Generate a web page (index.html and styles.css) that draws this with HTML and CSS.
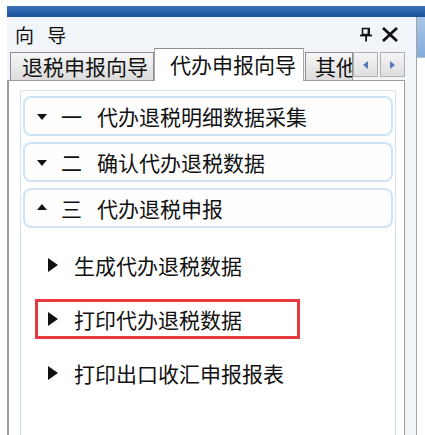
FILE: index.html
```html
<!DOCTYPE html>
<html lang="zh-CN">
<head>
    <meta charset="UTF-8">
    <title>向导</title>
    <link rel="stylesheet" href="styles.css">
</head>
<body>

    <div class="desk">
        <div class="cap"></div>

        <div class="row">
            <div class="pane">
                <div class="head">
                    <span class="title">向 导</span>
                    <span class="tools">
                        <svg class="pin" width="12" height="15" viewBox="0 0 12 15">
                            <path d="M2.5 1.5 H9 V7.5 H2.5 Z" fill="none" stroke="#111" stroke-width="1.6"/>
                            <rect x="7.6" y="1" width="2.2" height="7" fill="#111"/>
                            <rect x="0" y="7.6" width="12" height="1.8" fill="#111"/>
                            <rect x="5.2" y="8.5" width="1.8" height="6" fill="#111"/>
                        </svg>
                        <svg class="close" width="18" height="15" viewBox="0 0 18 15">
                            <path d="M2 1 L16 14 M16 1 L2 14" stroke="#111" stroke-width="2.8"/>
                        </svg>
                    </span>
                </div>

                <div class="tabs">
                    <div class="tab first">退税申报向导</div>
                    <div class="tab active">代办申报向导</div>
                    <div class="tab clip">其他</div>
                    <div class="scroll">
                        <span class="sbtn"><i class="tri left"></i></span>
                        <span class="sbtn"><i class="tri right"></i></span>
                    </div>
                </div>

                <div class="body">
                    <div class="acc">
                        <div class="acc-head">
                            <i class="caret down"></i>
                            <span class="num">一</span>
                            <span class="label">代办退税明细数据采集</span>
                        </div>
                        <div class="acc-head">
                            <i class="caret down"></i>
                            <span class="num">二</span>
                            <span class="label">确认代办退税数据</span>
                        </div>
                        <div class="acc-head">
                            <i class="caret up"></i>
                            <span class="num">三</span>
                            <span class="label">代办退税申报</span>
                        </div>

                        <ul class="steps">
                            <li class="step"><i class="play"></i>生成代办退税数据</li>
                            <li class="step hl"><i class="play"></i>打印代办退税数据</li>
                            <li class="step"><i class="play"></i>打印出口收汇申报报表</li>
                        </ul>
                    </div>
                </div>
            </div>

            <div class="side">
                <div class="side-top"></div>
            </div>
        </div>
    </div>

</body>
</html>
```

FILE: styles.css
```css
:root {
    --edge: #9c9c9c;
    --ice: #cfe2f6;
    --cap-top: #3d72ba;
    --cap-bottom: #1c539e;
    --pale: #f1f5fa;
    --mark: #e8393f;
}

body {
    margin: 0;
    background: #fff;
    font-family: "Noto Sans CJK SC", "Noto Sans", sans-serif;
    color: #111;
    overflow: hidden;
}

.desk {
    padding: 6px 0 0 7px;
    height: 429px;
    display: flex;
    flex-direction: column;
}

.cap {
    height: 11px;
    background: linear-gradient(var(--cap-top), var(--cap-bottom));
}

.row {
    flex: 1;
    display: flex;
    min-height: 0;
}

.pane {
    width: 409px;
    display: flex;
    flex-direction: column;
    background: var(--pale);
}

.head {
    height: 31px;
    display: flex;
    align-items: center;
    justify-content: space-between;
    padding: 0 17px 0 8px;
}

.title {
    font-size: 19px;
    line-height: 1;
    word-spacing: 9px;
    margin-top: 3px;
}

.tools {
    display: flex;
    align-items: center;
    gap: 9px;
    margin-top: 4px;
}

/* tab strip */
.tabs {
    height: 32px;
    display: flex;
    align-items: flex-end;
    padding-left: 3px;
    position: relative;
    z-index: 1;
}

.tab {
    height: 28px;
    box-sizing: border-box;
    border: 1px solid #8e8e8e;
    border-bottom: none;
    background: linear-gradient(#f6f6f6, #dcdcdc);
    font-size: 21px;
    line-height: 26px;
    white-space: nowrap;
    overflow: hidden;
}

.tab.first {
    width: 144px;
    padding-left: 11px;
}

.tab.active {
    width: 150px;
    height: 33px;
    margin-bottom: -1px;
    padding: 2px 0 0 15px;
    background: #fff;
    border-left-color: #a8a8a8;
    border-right-color: #a8a8a8;
}

.tab.clip {
    width: 48px;
    margin-left: 1px;
    padding-left: 9px;
}

.scroll {
    display: flex;
    gap: 2px;
    margin-bottom: 3px;
}

.sbtn {
    width: 25px;
    height: 25px;
    box-sizing: border-box;
    border: 1px solid #b0b0b0;
    background: linear-gradient(#f4f4f4, #dedede);
    display: flex;
    align-items: center;
    justify-content: center;
}

.tri {
    width: 0;
    height: 0;
    border-top: 4px solid transparent;
    border-bottom: 4px solid transparent;
}

.tri.left { border-right: 5px solid #5479bd; }
.tri.right { border-left: 5px solid #5479bd; }

/* content */
.body {
    flex: 1;
    width: 398px;
    box-sizing: border-box;
    border: 1px solid var(--edge);
    border-left: 2px solid var(--edge);
    border-bottom: none;
    background: #fff;
    padding: 9px 8px 0 11px;
    display: flex;
}

.acc {
    flex: 1;
    border: 1px solid var(--ice);
    border-bottom: none;
    border-radius: 4px 4px 0 0;
    padding: 5px 2px 0;
    display: flex;
    flex-direction: column;
    gap: 6px;
}

.acc-head {
    height: 40px;
    box-sizing: border-box;
    border: 2px solid var(--ice);
    border-radius: 8px;
    background: #fefefe;
    display: flex;
    align-items: center;
    font-size: 21px;
}

.caret {
    width: 0;
    height: 0;
    margin: 2px 0 0 12px;
    border-left: 5px solid transparent;
    border-right: 5px solid transparent;
}

.caret.down { border-top: 6px solid #111; }
.caret.up { border-bottom: 6px solid #111; margin-top: -3px; }

.num {
    margin-left: 14px;
}

.label {
    margin-left: 15px;
}

.steps {
    list-style: none;
    margin: 0;
    padding: 11px 0 0 12px;
    display: flex;
    flex-direction: column;
    gap: 14px;
}

.step {
    width: 265px;
    height: 40px;
    box-sizing: border-box;
    border: 3px solid transparent;
    display: flex;
    align-items: center;
    font-size: 21px;
}

.step.hl {
    border-color: var(--mark);
}

.play {
    width: 0;
    height: 0;
    margin: 0 16px 0 10px;
    border-top: 7px solid transparent;
    border-bottom: 7px solid transparent;
    border-left: 10px solid #111;
}

.side {
    flex: 1;
    border-left: 1px solid #a4a4a4;
    background: #fff;
}

.side-top {
    height: 40px;
    background: linear-gradient(#a9c6e8, #86acd9);
    border-bottom: 1px solid #b8c4d2;
}
```
